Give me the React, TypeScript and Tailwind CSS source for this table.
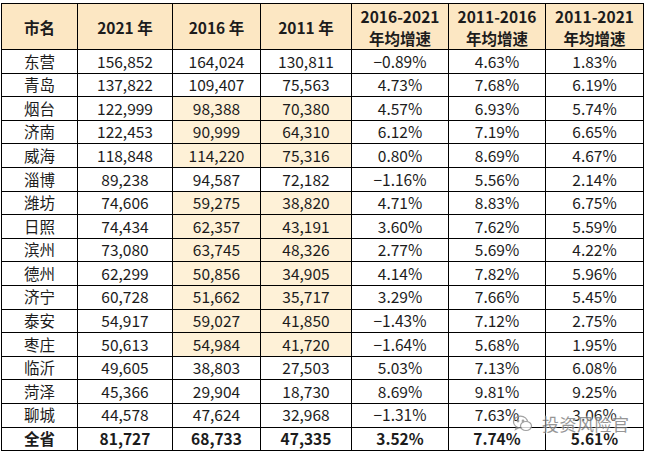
import React from 'react';

type Row = {
  city: string;
  v2021: string;
  v2016: string;
  v2011: string;
  g1: string;
  g2: string;
  g3: string;
  hl?: boolean;
};

const rows: Row[] = [
  { city: '东营', v2021: '156,852', v2016: '164,024', v2011: '130,811', g1: '−0.89%', g2: '4.63%', g3: '1.83%' },
  { city: '青岛', v2021: '137,822', v2016: '109,407', v2011: '75,563', g1: '4.73%', g2: '7.68%', g3: '6.19%' },
  { city: '烟台', v2021: '122,999', v2016: '98,388', v2011: '70,380', g1: '4.57%', g2: '6.93%', g3: '5.74%', hl: true },
  { city: '济南', v2021: '122,453', v2016: '90,999', v2011: '64,310', g1: '6.12%', g2: '7.19%', g3: '6.65%', hl: true },
  { city: '威海', v2021: '118,848', v2016: '114,220', v2011: '75,316', g1: '0.80%', g2: '8.69%', g3: '4.67%', hl: true },
  { city: '淄博', v2021: '89,238', v2016: '94,587', v2011: '72,182', g1: '−1.16%', g2: '5.56%', g3: '2.14%' },
  { city: '潍坊', v2021: '74,606', v2016: '59,275', v2011: '38,820', g1: '4.71%', g2: '8.83%', g3: '6.75%', hl: true },
  { city: '日照', v2021: '74,434', v2016: '62,357', v2011: '43,191', g1: '3.60%', g2: '7.62%', g3: '5.59%', hl: true },
  { city: '滨州', v2021: '73,080', v2016: '63,745', v2011: '48,326', g1: '2.77%', g2: '5.69%', g3: '4.22%', hl: true },
  { city: '德州', v2021: '62,299', v2016: '50,856', v2011: '34,905', g1: '4.14%', g2: '7.82%', g3: '5.96%', hl: true },
  { city: '济宁', v2021: '60,728', v2016: '51,662', v2011: '35,717', g1: '3.29%', g2: '7.66%', g3: '5.45%', hl: true },
  { city: '泰安', v2021: '54,917', v2016: '59,027', v2011: '41,850', g1: '−1.43%', g2: '7.12%', g3: '2.75%', hl: true },
  { city: '枣庄', v2021: '50,613', v2016: '54,984', v2011: '41,720', g1: '−1.64%', g2: '5.68%', g3: '1.95%', hl: true },
  { city: '临沂', v2021: '49,605', v2016: '38,803', v2011: '27,503', g1: '5.03%', g2: '7.13%', g3: '6.08%' },
  { city: '菏泽', v2021: '45,366', v2016: '29,904', v2011: '18,730', g1: '8.69%', g2: '9.81%', g3: '9.25%' },
  { city: '聊城', v2021: '44,578', v2016: '47,624', v2011: '32,968', g1: '−1.31%', g2: '7.63%', g3: '3.06%' },
];

const td = 'border border-black p-0';
const th = 'border border-black p-0 font-bold';

// 单元格内容：固定高度，居中
const Cell = ({ children }: { children: React.ReactNode }) => (
  <div className="h-[22.6px] flex items-center justify-center leading-none whitespace-nowrap">{children}</div>
);

const Head = ({ children }: { children: React.ReactNode }) => (
  <div className="h-[45px] flex flex-col items-center justify-center leading-[22px] whitespace-nowrap">
    {children}
  </div>
);

const App = () => {
  return (
    <div
      className="relative w-[645px] h-[454px] bg-white text-[15.5px] text-[#1c1c1c] overflow-hidden"
      style={{ fontFamily: '"Noto Sans CJK SC", "Noto Sans", sans-serif' }}
    >
      <table className="ml-[1px] mt-[3px] border-collapse table-fixed w-[642px]">
        <colgroup>
          <col className="w-[76px]" />
          <col className="w-[95px]" />
          <col className="w-[88px]" />
          <col className="w-[91px]" />
          <col className="w-[97px]" />
          <col className="w-[97px]" />
          <col className="w-[98px]" />
        </colgroup>
        <thead>
          <tr className="bg-[#fce7c3]">
            <th className={th}><Head>市名</Head></th>
            <th className={th}><Head>2021 年</Head></th>
            <th className={th}><Head>2016 年</Head></th>
            <th className={th}><Head>2011 年</Head></th>
            <th className={th}><Head><span>2016-2021</span><span>年均增速</span></Head></th>
            <th className={th}><Head><span>2011-2016</span><span>年均增速</span></Head></th>
            <th className={th}><Head><span>2011-2021</span><span>年均增速</span></Head></th>
          </tr>
        </thead>
        <tbody>
          {rows.map((r) => (
            <tr key={r.city}>
              <td className={td}><Cell>{r.city}</Cell></td>
              <td className={td}><Cell>{r.v2021}</Cell></td>
              <td className={`${td} ${r.hl ? 'bg-[#fef1d7]' : ''}`}><Cell>{r.v2016}</Cell></td>
              <td className={`${td} ${r.hl ? 'bg-[#fef1d7]' : ''}`}><Cell>{r.v2011}</Cell></td>
              <td className={td}><Cell>{r.g1}</Cell></td>
              <td className={td}><Cell>{r.g2}</Cell></td>
              <td className={td}><Cell>{r.g3}</Cell></td>
            </tr>
          ))}
          <tr className="font-bold">
            <td className={td}><Cell>全省</Cell></td>
            <td className={td}><Cell>81,727</Cell></td>
            <td className={td}><Cell>68,733</Cell></td>
            <td className={td}><Cell>47,335</Cell></td>
            <td className={td}><Cell>3.52%</Cell></td>
            <td className={td}><Cell>7.74%</Cell></td>
            <td className={td}><Cell>5.61%</Cell></td>
          </tr>
        </tbody>
      </table>

      {/* 水印 */}
      <div className="absolute left-[512px] top-[414px] flex items-center gap-[8px] opacity-80">
        <svg width="22" height="20" viewBox="0 0 22 20" fill="none" stroke="#8a8a8a" strokeWidth="1.2">
          <ellipse cx="8.5" cy="8" rx="7" ry="5.8" />
          <path d="M4.5 12.8 L3.5 15.5 L7 13.6" />
          <ellipse cx="14" cy="12" rx="5.5" ry="4.5" fill="white" />
          <circle cx="6" cy="7" r="0.8" fill="#8a8a8a" />
          <circle cx="11" cy="7" r="0.8" fill="#8a8a8a" />
        </svg>
        <span
          className="text-[17px] leading-[20px] text-[#7d7d7d] tracking-[0.5px]"
          style={{ textShadow: '0 0 2px #fff, 0 0 2px #fff' }}
        >
          投资风险官
        </span>
      </div>
    </div>
  );
};

export default App;
